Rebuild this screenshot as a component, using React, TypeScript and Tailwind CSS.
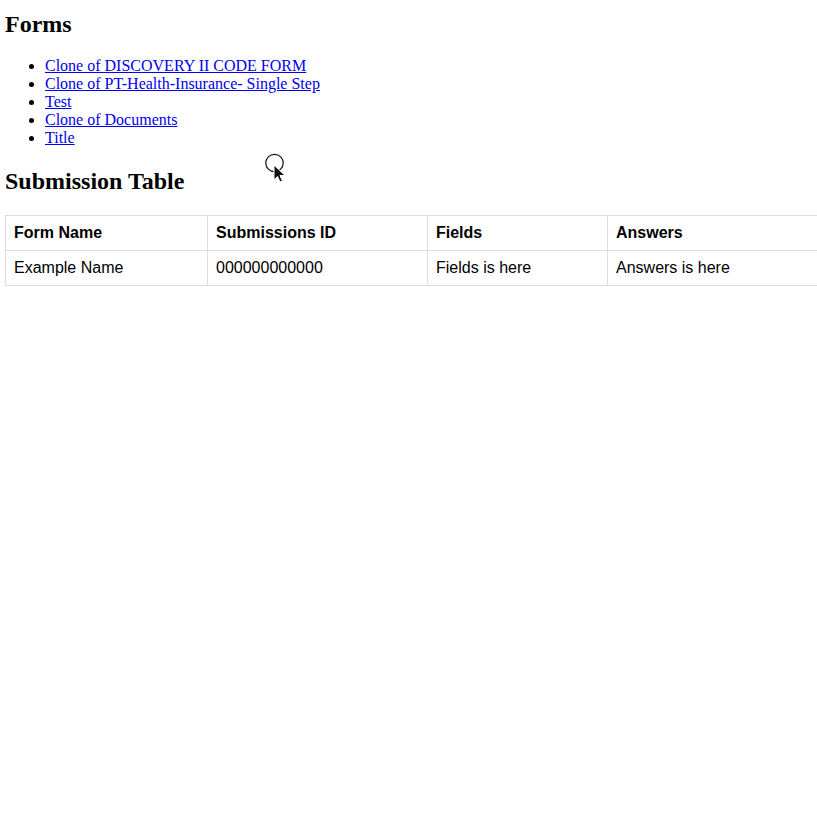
import React from 'react'

const forms = [
  'Clone of DISCOVERY II CODE FORM',
  'Clone of PT-Health-Insurance- Single Step',
  'Test',
  'Clone of Documents',
  'Title',
]

const Cursor = () => (
  <svg
    className="absolute left-[264px] top-[153px] pointer-events-none"
    width="26"
    height="32"
    viewBox="0 0 26 32"
  >
    <circle cx="10.5" cy="10" r="8.7" fill="white" stroke="#111" strokeWidth="1.2" />
    <path
      d="M10 12 L10 27 L13.5 23.5 L16 29 L18.5 28 L16 22.5 L21 22.5 Z"
      fill="#111"
      stroke="white"
      strokeWidth="1"
      strokeLinejoin="round"
    />
  </svg>
)

export default function App() {
  return (
    <div className="relative min-h-[818px] bg-white pl-[5px] overflow-hidden text-black font-['Liberation_Serif','Times_New_Roman',serif]">
      <h2 className="mt-[10px] text-[24px] leading-[28px] font-bold">Forms</h2>
      <ul className="mt-[19px] pl-[40px] list-disc text-[16px] leading-[18px]">
        {forms.map((f) => (
          <li key={f}>
            <a href="#" className="text-[#0000ee] underline">
              {f}
            </a>
          </li>
        ))}
      </ul>

      <h2 className="mt-[20px] text-[24px] leading-[28px] font-bold">Submission Table</h2>

      <table className="mt-[20px] w-[1000px] table-fixed border-collapse font-['Liberation_Sans',Arial,sans-serif] text-[16px] leading-[18px]">
        <thead>
          <tr>
            <th className="w-[202px] border border-[#dddddd] px-[8px] py-[8px] text-left font-bold">Form Name</th>
            <th className="w-[220px] border border-[#dddddd] px-[8px] py-[8px] text-left font-bold">Submissions ID</th>
            <th className="w-[180px] border border-[#dddddd] px-[8px] py-[8px] text-left font-bold">Fields</th>
            <th className="border border-[#dddddd] px-[8px] py-[8px] text-left font-bold">Answers</th>
          </tr>
        </thead>
        <tbody>
          <tr>
            <td className="border border-[#dddddd] px-[8px] py-[8px]">Example Name</td>
            <td className="border border-[#dddddd] px-[8px] py-[8px]">000000000000</td>
            <td className="border border-[#dddddd] px-[8px] py-[8px]">Fields is here</td>
            <td className="border border-[#dddddd] px-[8px] py-[8px]">Answers is here</td>
          </tr>
        </tbody>
      </table>

      <Cursor />
    </div>
  )
}
